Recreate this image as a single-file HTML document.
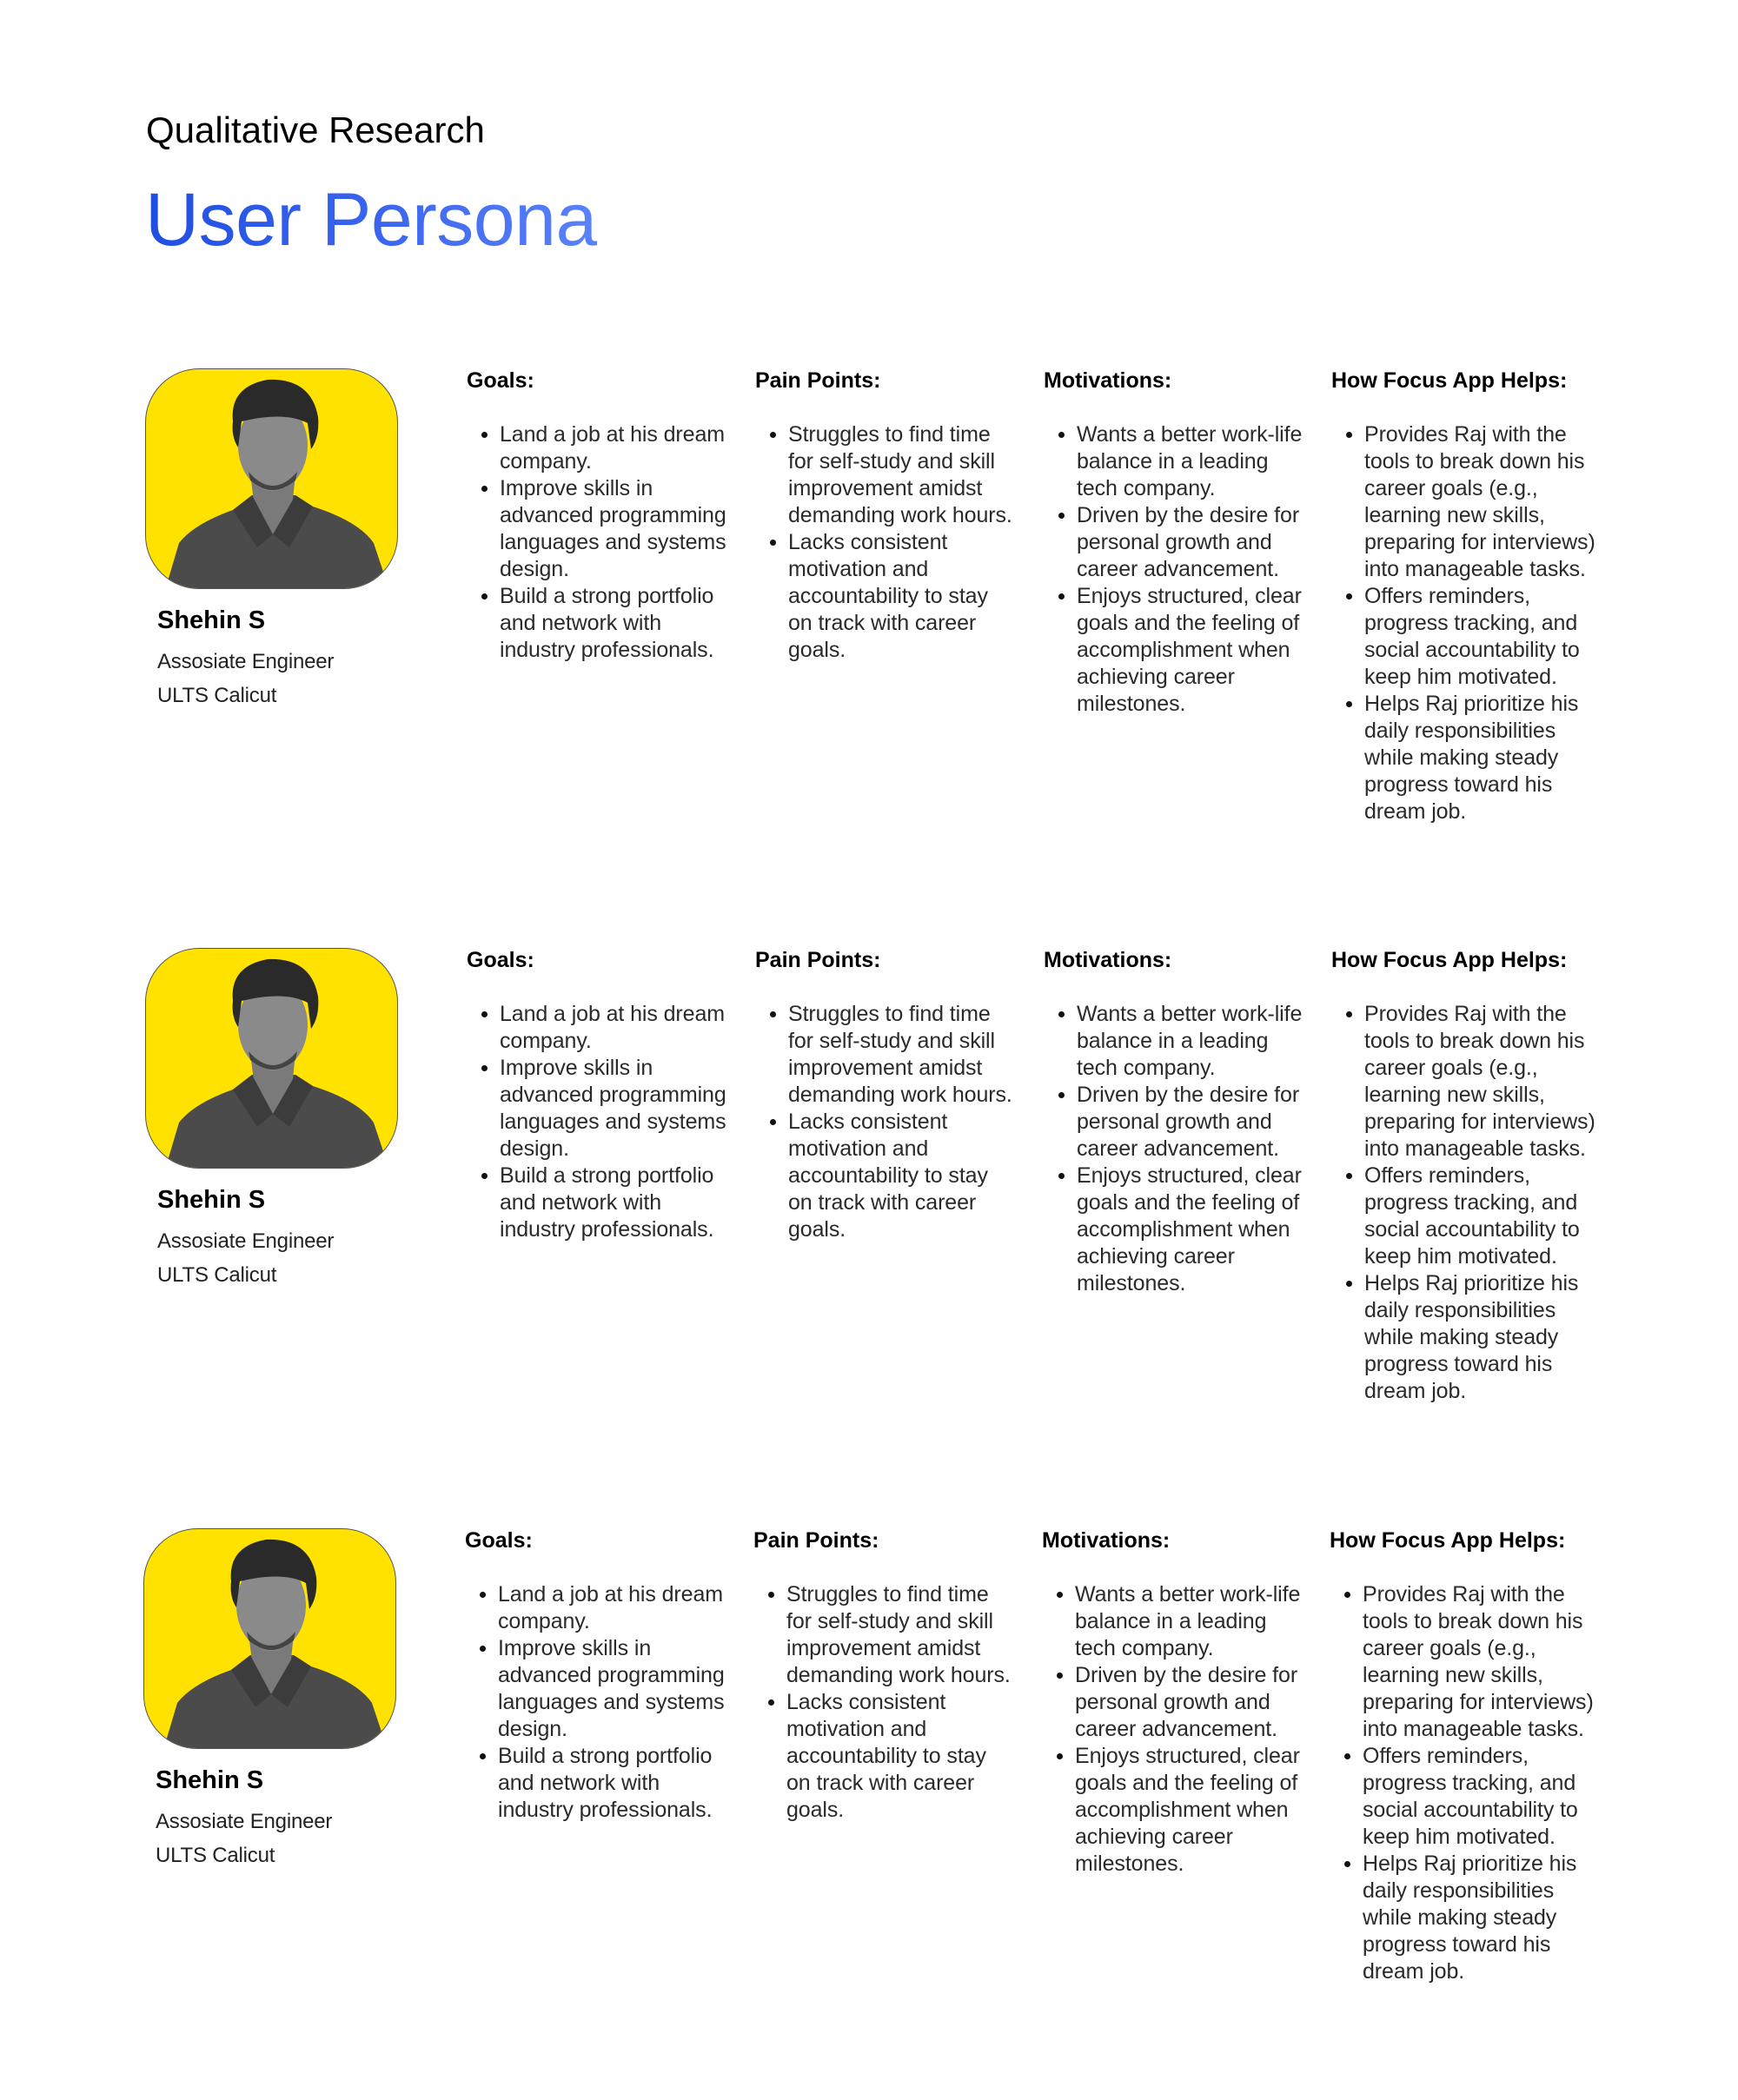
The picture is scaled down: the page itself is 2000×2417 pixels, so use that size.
<!DOCTYPE html>
<html><head><meta charset="utf-8"><style>
*{margin:0;padding:0;box-sizing:border-box}
body{width:2000px;height:2417px;background:#fff;position:relative;font-family:"Liberation Sans",Arial,sans-serif;color:#1c1c1c;overflow:hidden}
.t1{position:absolute;left:168px;top:126px;font-size:42px;line-height:48px;color:#000;letter-spacing:0px;white-space:nowrap}
.t2{position:absolute;left:167px;top:203px;font-size:86px;line-height:100px;white-space:nowrap;letter-spacing:-0.5px;background:linear-gradient(90deg,#1f4ee0,#3a64ee 50%,#5a82fa);-webkit-background-clip:text;background-clip:text;color:transparent}
.sec{position:absolute;left:0;width:2000px;height:600px}
.ph{position:absolute;left:167px;top:0;width:291px;height:254px;border-radius:62px;overflow:hidden;border:1.5px solid #555;background:#ffe200}
.nm{position:absolute;left:181px;top:273px;font-size:29px;line-height:34px;font-weight:bold;color:#000;white-space:nowrap}
.sb{position:absolute;left:181px;font-size:24px;line-height:38px;color:#222;white-space:nowrap;letter-spacing:-0.2px}
.h{position:absolute;top:-1px;font-size:25px;line-height:30px;font-weight:bold;color:#000;white-space:nowrap}
.ul{position:absolute;top:61px;font-size:25px;line-height:31px;white-space:nowrap;letter-spacing:-0.1px;color:#2a2a2a}
.li{position:relative}
.li:before{content:"";position:absolute;left:-21px;top:12px;width:7px;height:7px;border-radius:50%;background:#111}
</style></head><body>
<div class="t1">Qualitative Research</div>
<div class="t2">User Persona</div>

<div class="sec" style="top:424px">
 <div class="ph"><svg width="291" height="254" viewBox="0 0 291 254">
  <path d="M22 254 L38 200 Q55 178 100 162 L122 145 L172 145 L192 158 Q245 175 262 200 L280 254 Z" fill="#4b4b4b"/>
  <path d="M120 120 L125 160 L146 190 L168 160 L172 120 Z" fill="#7a7a7a"/>
  <path d="M100 162 L122 145 L146 190 L128 205 Z M192 158 L172 145 L146 190 L165 205 Z" fill="#3c3c3c"/>
  <ellipse cx="146" cy="88" rx="40" ry="52" fill="#8a8a8a"/>
  <path d="M100 60 Q96 20 140 12 Q190 10 198 55 Q200 78 190 92 L186 62 Q160 48 110 60 L106 90 Q98 78 100 60 Z" fill="#2a2a2a"/>
  <path d="M118 118 Q146 150 174 118 L172 128 Q146 150 120 128 Z" fill="#444"/>
 </svg></div>
 <div class="nm">Shehin S</div>
 <div class="sb" style="top:319px">Assosiate Engineer</div>
 <div class="sb" style="top:358px">ULTS Calicut</div>
 <div class="h" style="left:537px">Goals:</div>
 <div class="ul" style="left:575px"><div class="li">Land a job at his dream<br>company.</div><div class="li">Improve skills in<br>advanced programming<br>languages and systems<br>design.</div><div class="li">Build a strong portfolio<br>and network with<br>industry professionals.</div></div>
 <div class="h" style="left:869px">Pain Points:</div>
 <div class="ul" style="left:907px"><div class="li">Struggles to find time<br>for self-study and skill<br>improvement amidst<br>demanding work hours.</div><div class="li">Lacks consistent<br>motivation and<br>accountability to stay<br>on track with career<br>goals.</div></div>
 <div class="h" style="left:1201px">Motivations:</div>
 <div class="ul" style="left:1239px"><div class="li">Wants a better work-life<br>balance in a leading<br>tech company.</div><div class="li">Driven by the desire for<br>personal growth and<br>career advancement.</div><div class="li">Enjoys structured, clear<br>goals and the feeling of<br>accomplishment when<br>achieving career<br>milestones.</div></div>
 <div class="h" style="left:1532px">How Focus App Helps:</div>
 <div class="ul" style="left:1570px"><div class="li">Provides Raj with the<br>tools to break down his<br>career goals (e.g.,<br>learning new skills,<br>preparing for interviews)<br>into manageable tasks.</div><div class="li">Offers reminders,<br>progress tracking, and<br>social accountability to<br>keep him motivated.</div><div class="li">Helps Raj prioritize his<br>daily responsibilities<br>while making steady<br>progress toward his<br>dream job.</div></div>
</div>

<div class="sec" style="top:1091px">
 <div class="ph"><svg width="291" height="254" viewBox="0 0 291 254">
  <path d="M22 254 L38 200 Q55 178 100 162 L122 145 L172 145 L192 158 Q245 175 262 200 L280 254 Z" fill="#4b4b4b"/>
  <path d="M120 120 L125 160 L146 190 L168 160 L172 120 Z" fill="#7a7a7a"/>
  <path d="M100 162 L122 145 L146 190 L128 205 Z M192 158 L172 145 L146 190 L165 205 Z" fill="#3c3c3c"/>
  <ellipse cx="146" cy="88" rx="40" ry="52" fill="#8a8a8a"/>
  <path d="M100 60 Q96 20 140 12 Q190 10 198 55 Q200 78 190 92 L186 62 Q160 48 110 60 L106 90 Q98 78 100 60 Z" fill="#2a2a2a"/>
  <path d="M118 118 Q146 150 174 118 L172 128 Q146 150 120 128 Z" fill="#444"/>
 </svg></div>
 <div class="nm">Shehin S</div>
 <div class="sb" style="top:319px">Assosiate Engineer</div>
 <div class="sb" style="top:358px">ULTS Calicut</div>
 <div class="h" style="left:537px">Goals:</div>
 <div class="ul" style="left:575px"><div class="li">Land a job at his dream<br>company.</div><div class="li">Improve skills in<br>advanced programming<br>languages and systems<br>design.</div><div class="li">Build a strong portfolio<br>and network with<br>industry professionals.</div></div>
 <div class="h" style="left:869px">Pain Points:</div>
 <div class="ul" style="left:907px"><div class="li">Struggles to find time<br>for self-study and skill<br>improvement amidst<br>demanding work hours.</div><div class="li">Lacks consistent<br>motivation and<br>accountability to stay<br>on track with career<br>goals.</div></div>
 <div class="h" style="left:1201px">Motivations:</div>
 <div class="ul" style="left:1239px"><div class="li">Wants a better work-life<br>balance in a leading<br>tech company.</div><div class="li">Driven by the desire for<br>personal growth and<br>career advancement.</div><div class="li">Enjoys structured, clear<br>goals and the feeling of<br>accomplishment when<br>achieving career<br>milestones.</div></div>
 <div class="h" style="left:1532px">How Focus App Helps:</div>
 <div class="ul" style="left:1570px"><div class="li">Provides Raj with the<br>tools to break down his<br>career goals (e.g.,<br>learning new skills,<br>preparing for interviews)<br>into manageable tasks.</div><div class="li">Offers reminders,<br>progress tracking, and<br>social accountability to<br>keep him motivated.</div><div class="li">Helps Raj prioritize his<br>daily responsibilities<br>while making steady<br>progress toward his<br>dream job.</div></div>
</div>

<div class="sec" style="top:1759px;left:-2px">
 <div class="ph"><svg width="291" height="254" viewBox="0 0 291 254">
  <path d="M22 254 L38 200 Q55 178 100 162 L122 145 L172 145 L192 158 Q245 175 262 200 L280 254 Z" fill="#4b4b4b"/>
  <path d="M120 120 L125 160 L146 190 L168 160 L172 120 Z" fill="#7a7a7a"/>
  <path d="M100 162 L122 145 L146 190 L128 205 Z M192 158 L172 145 L146 190 L165 205 Z" fill="#3c3c3c"/>
  <ellipse cx="146" cy="88" rx="40" ry="52" fill="#8a8a8a"/>
  <path d="M100 60 Q96 20 140 12 Q190 10 198 55 Q200 78 190 92 L186 62 Q160 48 110 60 L106 90 Q98 78 100 60 Z" fill="#2a2a2a"/>
  <path d="M118 118 Q146 150 174 118 L172 128 Q146 150 120 128 Z" fill="#444"/>
 </svg></div>
 <div class="nm">Shehin S</div>
 <div class="sb" style="top:319px">Assosiate Engineer</div>
 <div class="sb" style="top:358px">ULTS Calicut</div>
 <div class="h" style="left:537px">Goals:</div>
 <div class="ul" style="left:575px"><div class="li">Land a job at his dream<br>company.</div><div class="li">Improve skills in<br>advanced programming<br>languages and systems<br>design.</div><div class="li">Build a strong portfolio<br>and network with<br>industry professionals.</div></div>
 <div class="h" style="left:869px">Pain Points:</div>
 <div class="ul" style="left:907px"><div class="li">Struggles to find time<br>for self-study and skill<br>improvement amidst<br>demanding work hours.</div><div class="li">Lacks consistent<br>motivation and<br>accountability to stay<br>on track with career<br>goals.</div></div>
 <div class="h" style="left:1201px">Motivations:</div>
 <div class="ul" style="left:1239px"><div class="li">Wants a better work-life<br>balance in a leading<br>tech company.</div><div class="li">Driven by the desire for<br>personal growth and<br>career advancement.</div><div class="li">Enjoys structured, clear<br>goals and the feeling of<br>accomplishment when<br>achieving career<br>milestones.</div></div>
 <div class="h" style="left:1532px">How Focus App Helps:</div>
 <div class="ul" style="left:1570px"><div class="li">Provides Raj with the<br>tools to break down his<br>career goals (e.g.,<br>learning new skills,<br>preparing for interviews)<br>into manageable tasks.</div><div class="li">Offers reminders,<br>progress tracking, and<br>social accountability to<br>keep him motivated.</div><div class="li">Helps Raj prioritize his<br>daily responsibilities<br>while making steady<br>progress toward his<br>dream job.</div></div>
</div>
</body></html>
